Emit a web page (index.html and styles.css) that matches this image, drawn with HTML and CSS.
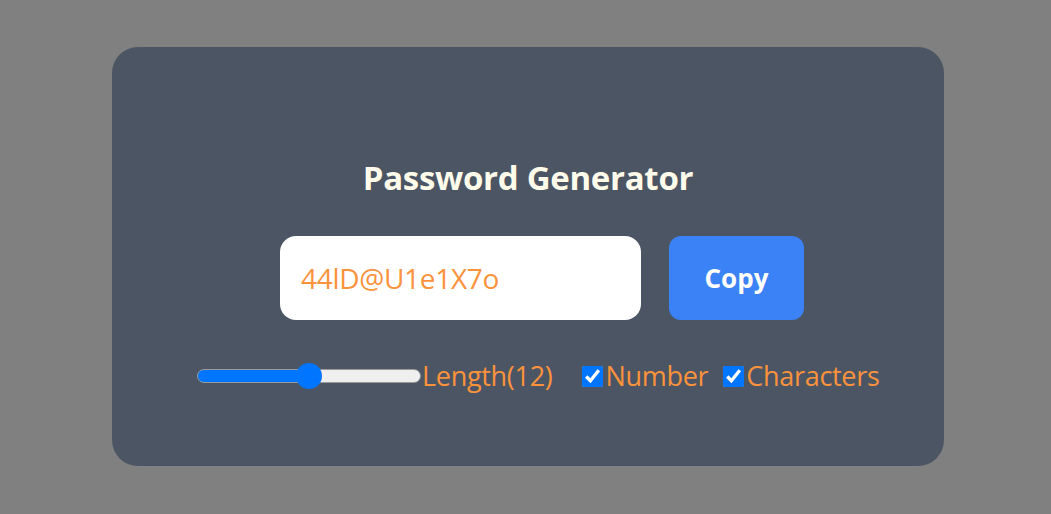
FILE: index.html
```html
<!DOCTYPE html>
<html lang="en">
<head>
<meta charset="utf-8">
<title>Password Generator</title>
<link rel="stylesheet" href="styles.css">
</head>
<body>
  <div class="card">
    <h1 class="title">Password Generator</h1>
    <div class="pw-row">
      <input class="pw-input" type="text" value="44lD@U1e1X7o" readonly>
      <button class="copy-btn">Copy</button>
    </div>
    <div class="options">
      <input class="range" type="range" min="6" max="18" value="12">
      <label class="opt-label">Length(12)</label>
      <input class="check check-first" type="checkbox" checked id="num">
      <label class="opt-label" for="num">Number</label>
      <input class="check check-second" type="checkbox" checked id="chars">
      <label class="opt-label" for="chars">Characters</label>
    </div>
  </div>
</body>
</html>
```
FILE: styles.css
```css
html, body {
  margin: 0;
  padding: 0;
}
body {
  background: #808080;
  width: 1051px;
  height: 514px;
  padding-top: 47px;
  box-sizing: border-box;
  font-family: "Open Sans", "Noto Sans", sans-serif;
}
.card {
  margin-left: 112px;
  width: 832px;
  height: 419px;
  box-sizing: border-box;
  background: #4b5563;
  border-radius: 26px;
  display: flex;
  flex-direction: column;
  align-items: flex-start;
  padding-top: 111px;
}
.title {
  align-self: center;
  margin: 0;
  color: #fffbeb;
  font-size: 33px;
  line-height: 40px;
  font-weight: 700;
  letter-spacing: -0.3px;
}
.pw-row {
  display: flex;
  gap: 28px;
  margin-top: 38px;
  margin-left: 168px;
}
.pw-input {
  width: 361px;
  height: 84px;
  box-sizing: border-box;
  border: none;
  outline: none;
  border-radius: 16px;
  background: #ffffff;
  padding: 0 21px;
  color: #fb923c;
  font-family: "Open Sans", "Noto Sans", sans-serif;
  font-size: 28px;
  letter-spacing: -0.3px;
}
.copy-btn {
  width: 135px;
  height: 84px;
  border: none;
  border-radius: 12px;
  background: #3b82f6;
  color: #ffffff;
  font-family: "Open Sans", "Noto Sans", sans-serif;
  font-size: 26px;
  font-weight: 700;
  padding: 0;
}
.options {
  display: flex;
  align-items: center;
  margin-left: 85px;
  margin-top: 37px;
  height: 38px;
}
.opt-label {
  color: #fb923c;
  font-size: 27px;
  line-height: 38px;
  letter-spacing: -0.3px;
}
.range {
  -webkit-appearance: none;
  appearance: none;
  width: 224px;
  height: 14px;
  margin: 0 1px 0 0;
  border-radius: 7px;
  background: linear-gradient(to right, #0075ff 0%, #0075ff 50%, #efefef 50%, #efefef 100%);
  border: 1px solid #9a9a9a;
  box-sizing: border-box;
  outline: none;
}
.range::-webkit-slider-thumb {
  -webkit-appearance: none;
  appearance: none;
  width: 26px;
  height: 26px;
  border-radius: 50%;
  background: #0075ff;
  border: none;
}
.check {
  width: 21px;
  height: 21px;
  margin: 0 2px 0 0;
  accent-color: #0075ff;
}
.check-first {
  margin-left: 30px;
}
.check-second {
  margin-left: 15px;
}
```
